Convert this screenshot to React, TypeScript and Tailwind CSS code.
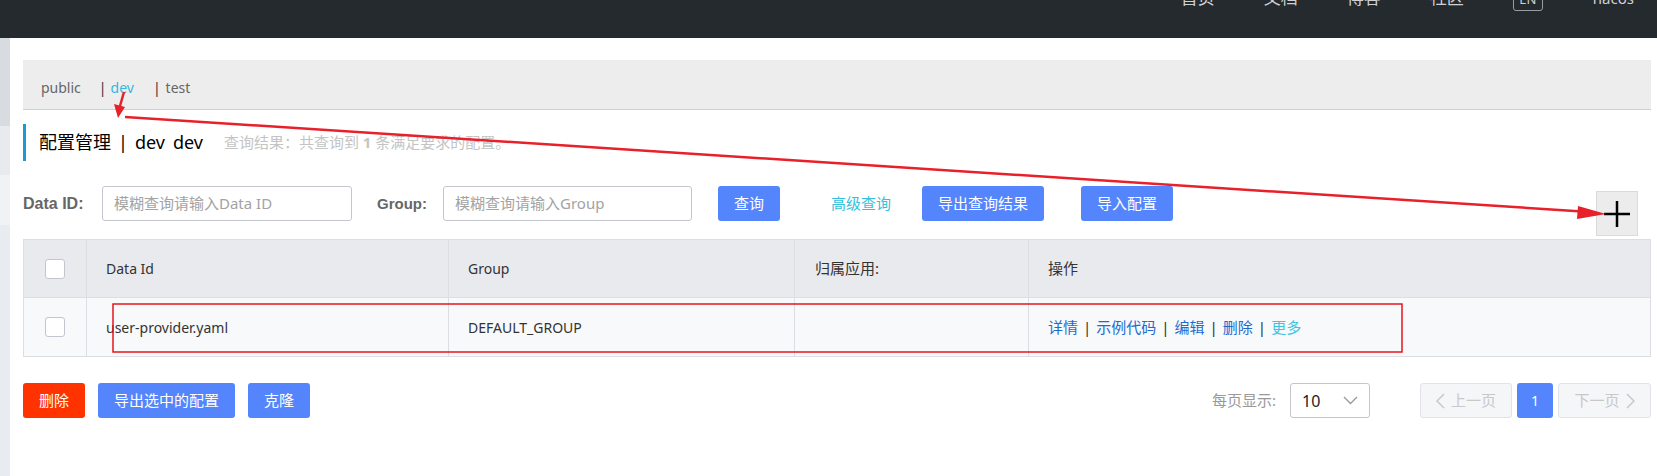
import React from "react";

const navItems = ["首页", "文档", "博客", "社区"];

function Checkbox() {
  return <span className="block h-[20px] w-[20px] rounded-[3px] border border-[#c4c6cf] bg-white" />;
}

function BlueButton({ children, className = "" }: { children: React.ReactNode; className?: string }) {
  return (
    <button className={`flex h-[35px] items-center justify-center rounded-[3px] bg-[#5485fc] text-[15px] text-white ${className}`}>
      {children}
    </button>
  );
}

export default function App() {
  return (
    <div className="relative h-[476px] w-[1657px] overflow-hidden bg-white font-['Noto_Sans','Noto_Sans_CJK_SC',sans-serif] text-[14px] text-[#333]">
      {/* Top bar, nav text is cut off at the top edge */}
      <header className="flex h-[38px] items-start justify-end bg-[#252a2f] pr-[23px]">
        <div className="flex h-[24px] -translate-y-[14px] items-center gap-[49px] text-[#cfd1d3]">
          {navItems.map((n) => (
            <span key={n} className="text-[17px]">{n}</span>
          ))}
          <span className="flex h-[22px] w-[30px] translate-y-[2px] items-center justify-center rounded-[3px] border border-[#9a9da0] text-[13px]">
            EN
          </span>
          <span className="ml-[1px] text-[15px]">nacos</span>
        </div>
      </header>

      <div className="flex h-[438px]">
        {/* Sidebar edge */}
        <aside className="flex w-[10px] flex-col">
          <div className="h-[88px] bg-[#d8dbe0]" />
          <div className="h-[49px] bg-[#e8eaee]" />
          <div className="h-[50px] bg-[#f1f2f4]" />
          <div className="flex-1 bg-[#e8ebf0]" />
        </aside>

        <main className="flex-1 pl-[13px] pr-[6px] pt-[22px]">
          {/* Namespace tabs */}
          <div className="flex h-[50px] items-center border-b border-[#cfcfcf] bg-[#ededed] pl-[18px] pt-[5px] text-[14px] text-[#666]">
            <span>public</span>
            <span className="ml-[18px] text-[#333]">|</span>
            <span className="ml-[4px] text-[#35b7df]">dev</span>
            <span className="ml-[19px] text-[#333]">|</span>
            <span className="ml-[5px]">test</span>
          </div>

          {/* Title */}
          <div className="mt-[14px] flex h-[37px] items-center border-l-[3px] border-[#1a9bd6] pl-[13px]">
            <span className="text-[18px] text-black">配置管理</span>
            <span className="ml-[7px] text-[18px] text-black">|</span>
            <span className="ml-[7px] text-[18px] text-black">dev</span>
            <span className="ml-[8px] text-[18px] text-black">dev</span>
            <span className="ml-[21px] text-[15px] text-[#c4c4c4]">
              查询结果：共查询到 <b className="font-bold">1</b> 条满足要求的配置。
            </span>
          </div>

          {/* Search row */}
          <div className="mt-[25px] flex items-start">
            <label className="w-[63px] font-['Liberation_Sans',sans-serif] text-[16px] leading-[35px] font-bold text-[#666]">Data ID:</label>
            <div className="ml-[16px] flex h-[35px] w-[250px] items-center rounded-[3px] border border-[#c4c6cf] pl-[11px] text-[15px] text-[#a3a3a3]">
              模糊查询请输入Data ID
            </div>
            <label className="ml-[25px] w-[51px] font-['Liberation_Sans',sans-serif] text-[15px] leading-[35px] font-bold text-[#666]">Group:</label>
            <div className="ml-[15px] flex h-[35px] w-[249px] items-center rounded-[3px] border border-[#c4c6cf] pl-[11px] text-[15px] text-[#a3a3a3]">
              模糊查询请输入Group
            </div>
            <BlueButton className="ml-[26px] w-[62px]">查询</BlueButton>
            <span className="ml-[51px] text-[15px] leading-[35px] text-[#36bfdb]">高级查询</span>
            <BlueButton className="ml-[31px] w-[122px]">导出查询结果</BlueButton>
            <BlueButton className="ml-[37px] w-[92px]">导入配置</BlueButton>
            <div className="ml-auto mr-[13px] mt-[5px] flex h-[45px] w-[42px] items-center justify-center border border-[#dadada] bg-[#ececec]">
              <svg width="26" height="26" viewBox="0 0 26 26">
                <path d="M13 0v26M0 13h26" stroke="#000" strokeWidth="2.5" />
              </svg>
            </div>
          </div>

          {/* Table */}
          <div className="mt-[3px] border border-[#dcdee3]">
            <div className="grid h-[58px] grid-cols-[63px_362px_346px_234px_1fr] border-b border-[#dcdee3] bg-[#e9eaee]">
              <div className="flex items-center justify-center border-r border-[#dcdee3]"><Checkbox /></div>
              <div className="flex items-center border-r border-[#dcdee3] pl-[19px]">Data Id</div>
              <div className="flex items-center border-r border-[#dcdee3] pl-[19px]">Group</div>
              <div className="flex items-center border-r border-[#dcdee3] pl-[20px] text-[15px]">归属应用:</div>
              <div className="flex items-center pl-[19px] text-[15px]">操作</div>
            </div>
            <div className="grid h-[58px] grid-cols-[63px_362px_346px_234px_1fr] bg-[#f8f9fb]">
              <div className="flex items-center justify-center border-r border-[#dcdee3]"><Checkbox /></div>
              <div className="flex items-center border-r border-[#dcdee3] pl-[19px]">user-provider.yaml</div>
              <div className="flex items-center border-r border-[#dcdee3] pl-[19px]">DEFAULT_GROUP</div>
              <div className="border-r border-[#dcdee3]" />
              <div className="flex items-center pl-[19px] text-[15px]">
                <a className="text-[#1f6ad0]">详情</a>
                <span className="mx-[5px] text-[#333]">|</span>
                <a className="text-[#1f6ad0]">示例代码</a>
                <span className="mx-[5px] text-[#333]">|</span>
                <a className="text-[#1f6ad0]">编辑</a>
                <span className="mx-[5px] text-[#333]">|</span>
                <a className="text-[#1f6ad0]">删除</a>
                <span className="mx-[5px] text-[#333]">|</span>
                <a className="text-[#3cc5e3]">更多</a>
              </div>
            </div>
          </div>

          {/* Bottom actions + pagination */}
          <div className="mt-[26px] flex items-center">
            <button className="flex h-[35px] w-[62px] items-center justify-center rounded-[3px] bg-[#ff3300] text-[15px] text-white">删除</button>
            <BlueButton className="ml-[13px] w-[137px]">导出选中的配置</BlueButton>
            <BlueButton className="ml-[13px] w-[62px]">克隆</BlueButton>

            <span className="ml-auto text-[15px] text-[#999]">每页显示:</span>
            <div className="ml-[14px] flex h-[35px] w-[80px] items-center justify-between rounded-[3px] border border-[#c4c6cf] pl-[11px] pr-[11px] text-[16px] text-[#222]">
              10
              <svg width="15" height="9" viewBox="0 0 15 9">
                <path d="M1 1l6.5 6.5L14 1" fill="none" stroke="#999" strokeWidth="1.3" />
              </svg>
            </div>
            <div className="ml-[50px] flex h-[35px] w-[92px] items-center justify-center gap-[6px] rounded-[3px] border border-[#e1e3e7] bg-[#f5f6f8] text-[15px] text-[#c8c8c8]">
              <svg width="9" height="16" viewBox="0 0 9 16">
                <path d="M8 1L1 8l7 7" fill="none" stroke="#c8c8c8" strokeWidth="1.5" />
              </svg>
              上一页
            </div>
            <div className="ml-[5px] flex h-[35px] w-[36px] items-center justify-center rounded-[3px] bg-[#5485fc] text-white">1</div>
            <div className="ml-[5px] flex h-[35px] w-[93px] items-center justify-center gap-[6px] rounded-[3px] border border-[#e1e3e7] bg-[#f5f6f8] text-[15px] text-[#c8c8c8]">
              下一页
              <svg width="9" height="16" viewBox="0 0 9 16">
                <path d="M1 1l7 7-7 7" fill="none" stroke="#c8c8c8" strokeWidth="1.5" />
              </svg>
            </div>
          </div>
        </main>
      </div>

      {/* Red annotations drawn over the screenshot */}
      <svg className="pointer-events-none absolute inset-0" width="1657" height="476" viewBox="0 0 1657 476">
        <rect x="113" y="304" width="1289" height="48" fill="none" stroke="#e5141e" strokeWidth="1.5" />
        <line x1="124" y1="92" x2="120" y2="106" stroke="#e8202a" strokeWidth="2.5" />
        <polygon points="118,118 114,104 125,107" fill="#e8202a" />
        <line x1="125" y1="117" x2="1590" y2="212" stroke="#e8202a" strokeWidth="2.5" />
        <polygon points="1606,214 1578,206 1577,219" fill="#e8202a" />
      </svg>
    </div>
  );
}
